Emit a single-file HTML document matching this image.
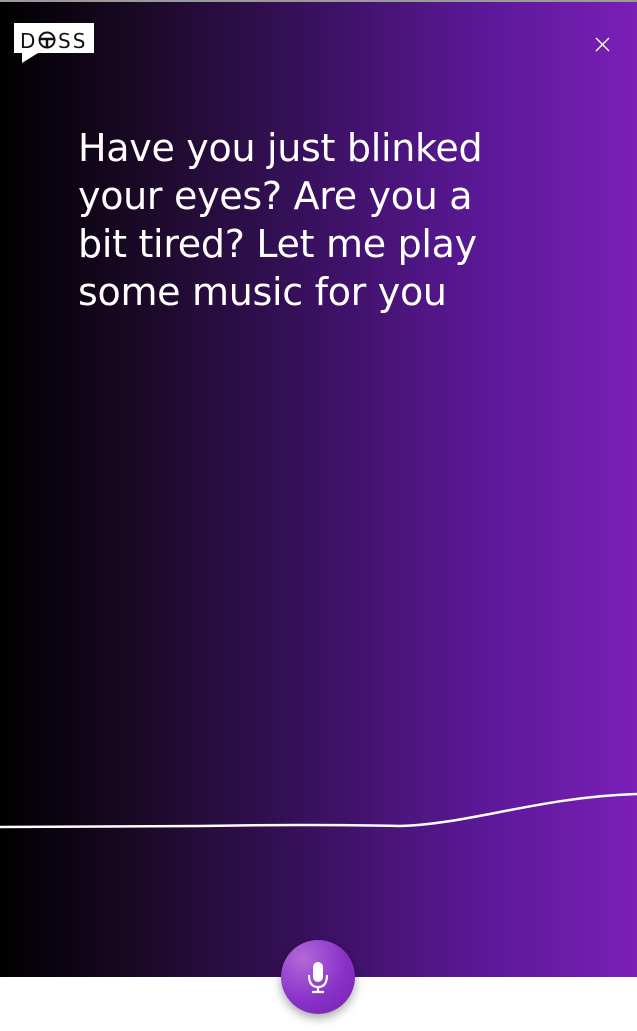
<!DOCTYPE html>
<html><head><style>
html,body{margin:0;padding:0;width:637px;height:1031px;overflow:hidden;background:#fff;}
.bg{position:absolute;left:0;top:2px;width:637px;height:975px;background:linear-gradient(90deg,#000 0%,#1e0a2c 25%,#3a1161 50%,#5a1896 75%,#7a1fb8 100%);}
.top{position:absolute;left:0;top:0;width:637px;height:2px;background:#9a9a9a;}
.txt{position:absolute;left:78px;top:124px;width:460px;font-family:"DejaVu Sans",sans-serif;font-size:38px;line-height:48px;color:#fff;letter-spacing:-0.3px;}
.mic{position:absolute;left:281px;top:940px;width:74px;height:74px;border-radius:50%;background:radial-gradient(circle at 30% 25%,#b26ad8,#8a32c8 55%,#7420b0);box-shadow:0 4px 10px rgba(0,0,0,.35);}
</style></head><body>
<div class="top"></div>
<div class="bg"></div>
<svg style="position:absolute;left:0;top:0" width="637" height="1031">
<path d="M14 23H94V53H38L22 63V53H14Z" fill="#fff"/>
<text x="20" y="48" font-family="DejaVu Sans,sans-serif" font-size="20" fill="#111">D</text>
<circle cx="47" cy="40" r="7.5" fill="none" stroke="#111" stroke-width="2"/>
<path d="M40 39H54M47 40V47" stroke="#111" stroke-width="2.5"/>
<text x="58" y="48" font-family="DejaVu Sans,sans-serif" font-size="20" fill="#111" letter-spacing="2">SS</text>
<path d="M596 38L609 51M609 38L596 51" stroke="#fff" stroke-width="1.4"/>
<path d="M0 827L200 826Q300 824 400 826C470 824 540 797 637 794" fill="none" stroke="#fff" stroke-width="2.5"/>
</svg>
<div class="txt">Have you just blinked<br>your eyes? Are you a<br>bit tired? Let me play<br>some music for you</div>
<div class="mic"><svg width="74" height="74">
<rect x="32" y="22" width="10" height="20" rx="5" fill="#fff"/>
<path d="M28 35Q28 47 37 47Q46 47 46 35" fill="none" stroke="#fff" stroke-width="2.2"/>
<path d="M37 47V52M31 52H43" stroke="#fff" stroke-width="2.2"/>
</svg></div>
</body></html>
